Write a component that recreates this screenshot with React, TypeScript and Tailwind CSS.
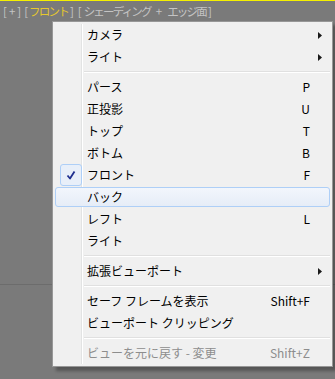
import React from 'react';

type Item =
  | { kind: 'sep' }
  | {
      kind: 'item';
      label: string;
      shortcut?: string;
      sub?: boolean;
      checked?: boolean;
      hover?: boolean;
      disabled?: boolean;
    };

const items: Item[] = [
  { kind: 'item', label: 'カメラ', sub: true },
  { kind: 'item', label: 'ライト', sub: true },
  { kind: 'sep' },
  { kind: 'item', label: 'パース', shortcut: 'P' },
  { kind: 'item', label: '正投影', shortcut: 'U' },
  { kind: 'item', label: 'トップ', shortcut: 'T' },
  { kind: 'item', label: 'ボトム', shortcut: 'B' },
  { kind: 'item', label: 'フロント', shortcut: 'F', checked: true },
  { kind: 'item', label: 'バック', hover: true },
  { kind: 'item', label: 'レフト', shortcut: 'L' },
  { kind: 'item', label: 'ライト' },
  { kind: 'sep' },
  { kind: 'item', label: '拡張ビューポート', sub: true },
  { kind: 'sep' },
  { kind: 'item', label: 'セーフ フレームを表示', shortcut: 'Shift+F' },
  { kind: 'item', label: 'ビューポート クリッピング' },
  { kind: 'sep' },
  { kind: 'item', label: 'ビューを元に戻す - 変更', shortcut: 'Shift+Z', disabled: true },
];

function Arrow() {
  return (
    <svg width="4" height="7" viewBox="0 0 4 7" className="block">
      <polygon points="0,0 4,3.5 0,7" fill="#1a1a1a" />
    </svg>
  );
}

function Check() {
  return (
    <svg width="12" height="12" viewBox="0 0 12 12" className="block">
      <path d="M2.5 6.5 L5 9.5 L9.5 2.5" fill="none" stroke="#1f2f8f" strokeWidth="1.8" strokeLinejoin="round" />
    </svg>
  );
}

function MenuRow({ item }: { item: Extract<Item, { kind: 'item' }> }) {
  const color = item.disabled ? 'text-[#8d8d8d]' : 'text-black';
  return (
    <div className="relative flex h-[22px] items-center">
      {item.hover && (
        <div className="absolute inset-x-[2px] inset-y-[1px] rounded-[3px] border border-[#aecff7] bg-gradient-to-b from-[#f2f6fc] to-[#e6edf7]" />
      )}
      <div className="relative flex h-[22px] w-[33px] items-center justify-center pl-[2px]">
        {item.checked && (
          <div className="flex h-[22px] w-[22px] items-center justify-center rounded-[3px] border border-[#aecff7] bg-[#e8eff9]">
            <Check />
          </div>
        )}
      </div>
      <span className={`relative flex-1 whitespace-nowrap pl-[1px] ${color}`}>{item.label}</span>
      <span className={`relative w-[60px] pr-[4px] text-right ${color}`}>{item.shortcut}</span>
      <div className="relative flex w-[18px] items-center pl-[4px]">{item.sub && <Arrow />}</div>
    </div>
  );
}

export default function App() {
  return (
    <div
      className="relative h-[379px] w-[335px] overflow-hidden bg-[#7a7a7a] text-[12px] leading-none"
      style={{ fontFamily: '"Noto Sans CJK JP", "Noto Sans", sans-serif' }}
    >
      <div className="h-[1px] bg-[#f5f000]" />
      <div className="flex h-[21px] items-center pl-[3px] text-[11.5px] text-[#c4c4c4]">
        <span className="tracking-[2px]">[+]</span>
        <span className="ml-[1px]">[</span>
        <span className="ml-[1px] tracking-[-1.8px] text-[#e6c82e]">フロント</span>
        <span className="ml-[2px]">]</span>
        <span className="ml-[4px]">[</span>
        <span className="ml-[2px] tracking-[-1.8px]">シェーディング</span>
        <span className="mx-[5px]">+</span>
        <span className="tracking-[-1.8px]">エッジ面</span>
        <span className="ml-[2px]">]</span>
      </div>
      <div className="absolute left-0 right-0 top-[284px] h-[1px] bg-[#6c6c6c]" />

      <div className="absolute left-[52px] top-[21px] w-[281px] border border-[#979797] bg-[#f0f0f0] py-[2px] shadow-[4px_4px_3px_rgba(0,0,0,0.3)]">
        <div className="absolute bottom-[2px] left-[28px] top-[2px] w-[1px] bg-[#e2e3e3]" />
        <div className="absolute bottom-[2px] left-[29px] top-[2px] w-[1px] bg-white" />
        {items.map((it, i) =>
          it.kind === 'sep' ? (
            <div key={i} className="flex h-[8px] flex-col justify-center pl-[31px] pr-[2px]">
              <div className="h-[1px] bg-[#e0e0e0]" />
              <div className="h-[1px] bg-white" />
            </div>
          ) : (
            <MenuRow key={i} item={it} />
          )
        )}
      </div>
    </div>
  );
}
